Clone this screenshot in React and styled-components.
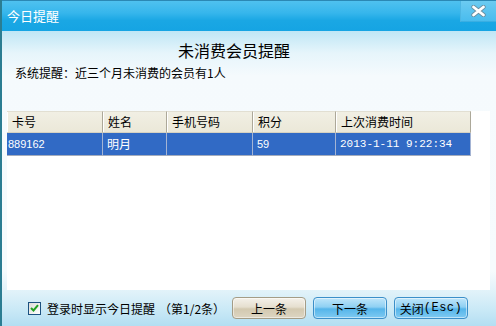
import React from "react";
import styled, { createGlobalStyle } from "styled-components";

const Global = createGlobalStyle`
  html, body { margin: 0; padding: 0; background: #ffffff; }
  body { font-family: "Noto Sans CJK SC", "Liberation Sans", sans-serif; }
`;

const Window = styled.div`
  width: 496px;
  height: 326px;
  display: flex;
  flex-direction: column;
  box-sizing: border-box;
  border-left: 2px solid #2b7d92;
  overflow: hidden;
`;

const TitleBar = styled.div`
  height: 31px;
  flex: none;
  box-sizing: border-box;
  border-top: 1px solid #2b88b4;
  display: flex;
  align-items: flex-start;
  background: linear-gradient(to bottom, #4fc1ef 0%, #36b6ec 40%, #1aa7e4 65%, #15a4e3 100%);
`;

const Title = styled.div`
  color: #ffffff;
  font-size: 13px;
  line-height: 29px;
  padding-left: 5px;
`;

const CloseButton = styled.div`
  margin-left: auto;
  width: 35px;
  height: 20px;
  display: flex;
  align-items: center;
  justify-content: center;
  background: linear-gradient(to bottom, #6ccbf1, #49bcee);
  border-left: 1px solid #4db6e3;
  border-bottom: 1px solid #3aaee2;
`;

const Body = styled.div`
  flex: 1;
  display: flex;
  flex-direction: column;
  background: linear-gradient(
    to bottom,
    #bfe6f5 0px,
    #e6f5fb 22px,
    #f5fafd 45px,
    #f6fbfd 240px,
    #dff1f9 262px,
    #c8e8f6 280px,
    #b3def2 100%
  );
`;

const Heading = styled.div`
  text-align: center;
  font-size: 16px;
  line-height: 20px;
  color: #000;
  margin-top: 9px;
  padding-right: 30px;
`;

const Notice = styled.div`
  font-size: 12px;
  line-height: 16px;
  color: #000;
  margin: 5px 0 0 13px;
`;

const Panel = styled.div`
  flex: none;
  height: 179px;
  margin: 30px 6px 0 5px;
  background: #ffffff;
`;

const Table = styled.div`
  width: 464px;
  display: grid;
  grid-template-columns: 96px 64px 86px 83px 135px;
  box-sizing: border-box;
`;

const HeadCell = styled.div`
  height: 22px;
  box-sizing: border-box;
  background: linear-gradient(to bottom, #f1efe4, #ebe8d8);
  border-right: 1px solid #aca899;
  box-shadow: inset 1px 0 0 #ffffff;
  border-bottom: 1px solid #d6d2c2;
  border-top: 1px solid #e2dfd2;
  font-size: 12px;
  line-height: 20px;
  padding-left: 5px;
  color: #000;
  white-space: nowrap;
`;

const Cell = styled.div`
  height: 23px;
  box-sizing: border-box;
  background: #316ac5;
  border-right: 1px solid #a4b4d4;
  border-bottom: 1px solid #a4acbc;
  color: #ffffff;
  font-size: ${(p) => (p.$mono ? "11px" : p.$num ? "11px" : "12px")};
  font-family: ${(p) =>
    p.$mono
      ? '"Liberation Mono", monospace'
      : p.$num
      ? '"Liberation Sans", sans-serif'
      : '"Noto Sans CJK SC", sans-serif'};
  line-height: 22px;
  padding-left: ${(p) => (p.$first ? "1px" : "4px")};
  white-space: nowrap;
`;

const Footer = styled.div`
  flex: 1;
  display: flex;
  align-items: center;
  padding: 0 28px 0 26px;
`;

const CheckBox = styled.div`
  width: 13px;
  height: 13px;
  box-sizing: border-box;
  border: 1px solid #1c5180;
  background: linear-gradient(135deg, #dcdcd7, #ffffff);
  display: flex;
  align-items: center;
  justify-content: center;
  flex: none;
`;

const Label = styled.div`
  font-size: 12px;
  color: #000;
  margin-left: 6px;
  white-space: nowrap;
`;

const Count = styled.span`
  margin-left: 4px;
`;

const Buttons = styled.div`
  margin-left: auto;
  display: flex;
  gap: 7px;
`;

const Button = styled.div`
  width: 74px;
  height: 22px;
  box-sizing: border-box;
  border-radius: 4px;
  display: flex;
  align-items: center;
  justify-content: center;
  font-size: 12px;
  color: #000;
  border: 1px solid ${(p) => (p.$plain ? "#a49c86" : "#3b8fc9")};
  background: ${(p) =>
    p.$plain
      ? "linear-gradient(to bottom, #f4f1ea 0%, #e6dfcf 45%, #d3c9b0 55%, #ddd5c2 100%)"
      : "linear-gradient(to bottom, #bfe6fa 0%, #8fd0f3 45%, #55b5ea 55%, #7fcaf2 100%)"};
  box-shadow: inset 0 0 0 1px rgba(255, 255, 255, 0.5);
`;

const Esc = styled.span`
  font-family: "Liberation Mono", monospace;
  font-size: 12px;
  letter-spacing: 0.5px;
`;

const columns = ["卡号", "姓名", "手机号码", "积分", "上次消费时间"];

export default function App() {
  return (
    <>
      <Global />
      <Window>
        <TitleBar>
          <Title>今日提醒</Title>
          <CloseButton>
            <svg width="15" height="12" viewBox="0 0 15 12">
              <path
                d="M2.5 2 L12.5 10 M12.5 2 L2.5 10"
                stroke="#6a8ea0"
                strokeWidth="4.4"
                strokeLinecap="round"
              />
              <path
                d="M2.5 2 L12.5 10 M12.5 2 L2.5 10"
                stroke="#ffffff"
                strokeWidth="2.8"
                strokeLinecap="round"
              />
            </svg>
          </CloseButton>
        </TitleBar>
        <Body>
          <Heading>未消费会员提醒</Heading>
          <Notice>系统提醒：近三个月未消费的会员有1人</Notice>
          <Panel>
            <Table>
              {columns.map((c) => (
                <HeadCell key={c}>{c}</HeadCell>
              ))}
              <Cell $num $first>889162</Cell>
              <Cell>明月</Cell>
              <Cell></Cell>
              <Cell $num>59</Cell>
              <Cell $mono>2013-1-11 9:22:34</Cell>
            </Table>
          </Panel>
          <Footer>
            <CheckBox>
              <svg width="9" height="8" viewBox="0 0 9 8">
                <path d="M1 4 L3.5 6.5 L8 1.2" fill="none" stroke="#21a121" strokeWidth="2" />
              </svg>
            </CheckBox>
            <Label>
              登录时显示今日提醒<Count>（第1/2条）</Count>
            </Label>
            <Buttons>
              <Button $plain>上一条</Button>
              <Button>下一条</Button>
              <Button>
                关闭<Esc>(Esc)</Esc>
              </Button>
            </Buttons>
          </Footer>
        </Body>
      </Window>
    </>
  );
}
